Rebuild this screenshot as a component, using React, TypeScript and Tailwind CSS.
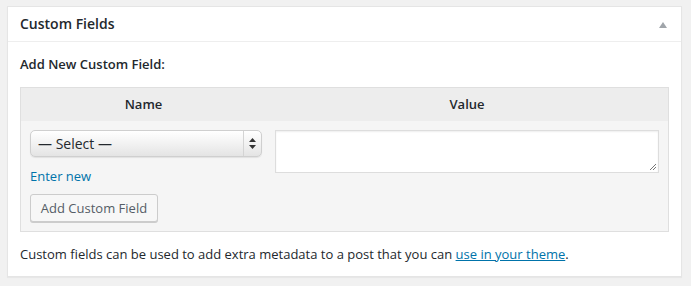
export default function App() {
  return (
    <div
      className="min-h-[286px] w-full bg-[#f1f1f1] pl-[7px] pt-[6px] text-[#23282d]"
      style={{ fontFamily: '"Open Sans", "Liberation Sans", sans-serif' }}
    >
      <div className="w-[675px] border border-[#e5e5e5] bg-white shadow-[0_1px_1px_rgba(0,0,0,0.04)]">
        {/* Box header */}
        <div className="flex h-[35px] items-center justify-between border-b border-[#eeeeee] pl-[12px] pr-[14px]">
          <h2 className="text-[14px] font-semibold leading-[20px]">Custom Fields</h2>
          <svg width="8" height="6" viewBox="0 0 8 6" className="mt-[1px]">
            <path d="M4 0 L8 6 L0 6 Z" fill="#a0a5aa" />
          </svg>
        </div>

        <div className="px-[12px] pb-[12px] pt-[12px]">
          <p className="text-[13px] font-semibold leading-[20px]">Add New Custom Field:</p>

          {/* Meta table */}
          <div className="mt-[13px] border border-[#dfdfdf]">
            <div className="flex h-[33px] items-center bg-[#ededed] text-[13px] font-semibold">
              <div className="w-[245px] text-center">Name</div>
              <div className="flex-1 text-center">Value</div>
            </div>
            <div className="flex bg-[#f5f5f5] pb-[9px] pt-[9px]">
              <div className="w-[245px] pl-[9px]">
                <div className="flex h-[27px] w-[232px] items-stretch rounded-[5px] border border-[#cfcfcf] bg-gradient-to-b from-[#ffffff] via-[#f2f2f2] to-[#e4e4e4] shadow-[0_1px_1px_rgba(0,0,0,0.08)]">
                  <span className="flex flex-1 items-center pl-[7px] text-[14px] leading-[20px]">— Select —</span>
                  <span className="flex w-[18px] items-center justify-center border-l border-[#d4d4d4]">
                    <svg width="7" height="11" viewBox="0 0 7 11">
                      <path d="M3.5 0 L7 4 L0 4 Z M3.5 11 L7 7 L0 7 Z" fill="#333" />
                    </svg>
                  </span>
                </div>
                <a className="mt-[9px] block text-[13px] leading-[20px] text-[#0073aa]">Enter new</a>
                <button className="mt-[8px] h-[28px] w-[128px] rounded-[3px] border border-[#cccccc] bg-[#f7f7f7] text-[13px] leading-[26px] text-[#555d66] shadow-[0_1px_0_#cccccc]">
                  Add Custom Field
                </button>
              </div>
              <div className="pl-[9px]">
                <div className="relative h-[43px] w-[384px] border border-[#dddddd] bg-white shadow-[inset_0_1px_2px_rgba(0,0,0,0.07)]">
                  <svg width="8" height="8" viewBox="0 0 8 8" className="absolute bottom-[1px] right-[1px]">
                    <path d="M7 1 L1 7 M7 4 L4 7" stroke="#777" strokeWidth="1" />
                  </svg>
                </div>
              </div>
            </div>
          </div>

          <p className="mt-[12px] text-[13px] leading-[20px]">
            Custom fields can be used to add extra metadata to a post that you can{' '}
            <a className="text-[#0073aa] underline">use in your theme</a>.
          </p>
        </div>
      </div>
    </div>
  );
}
